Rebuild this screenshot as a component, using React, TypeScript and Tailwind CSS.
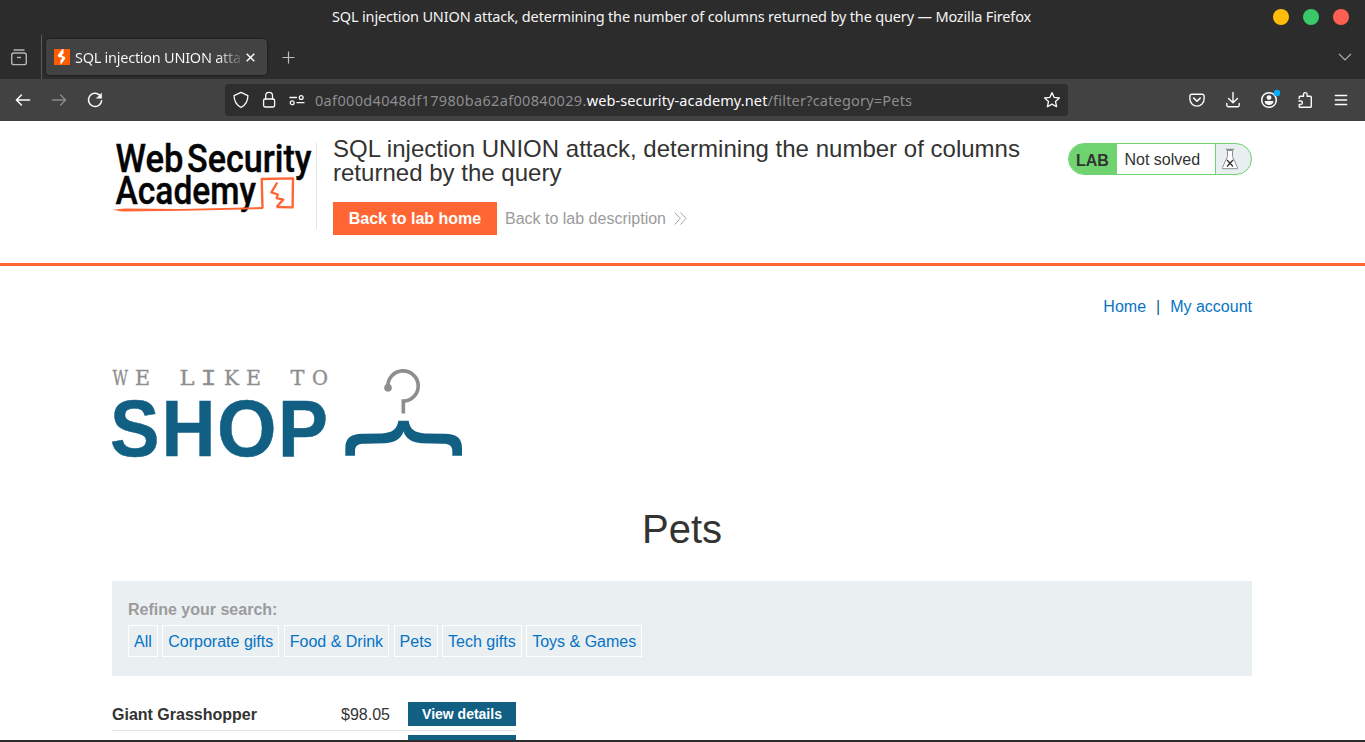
import React from 'react';

type IconProps = { children: React.ReactNode; className?: string; w?: number };

function Icon({ children, className = '', w = 1.3 }: IconProps) {
  return (
    <svg
      width="18"
      height="18"
      viewBox="0 0 18 18"
      fill="none"
      stroke="currentColor"
      strokeWidth={w}
      strokeLinecap="round"
      strokeLinejoin="round"
      className={`shrink-0 ${className}`}
    >
      {children}
    </svg>
  );
}

function TitleBar() {
  return (
    <div className="grid h-[35px] grid-cols-[1fr_auto_1fr] items-center">
      <span />
      <span className="mt-[-2px] ml-[-2px] text-[14.5px] tracking-[-0.165px] whitespace-nowrap text-[#f4f4f4]">
        SQL injection UNION attack, determining the number of columns returned by the query — Mozilla Firefox
      </span>
      <div className="mt-[-1px] flex justify-end gap-[14px] pr-4">
        <span className="size-4 rounded-full bg-[#ffbd09]" />
        <span className="size-4 rounded-full bg-[#3ac968]" />
        <span className="size-4 rounded-full bg-[#ff5f51]" />
      </div>
    </div>
  );
}

function TabStrip() {
  return (
    <div className="flex h-11 text-[#fbfbfe]">
      <div className="flex w-[42px] border-r border-[#5a5a5a] pt-[14px] pl-[10px] text-[#b4b4b4]">
        <Icon w={1.4}>
          <path d="M4 1h10" />
          <rect x="1.7" y="4" width="14.6" height="11.6" rx="2.2" />
          <path d="M7.5 8.5h3" />
        </Icon>
      </div>
      <div className="mt-1 ml-1 flex h-9 w-[221px] items-center rounded bg-[#424242] pl-2 shadow-[0_0_3px_rgba(0,0,0,0.6)]">
        <svg width="16" height="16" viewBox="0 0 16 16" className="shrink-0">
          <rect width="16" height="16" fill="#ff5c00" />
          <path d="M8.500 0 3.600 6.400l.9 1.600 3.300.600v2L6.500 10.700V16L11.500 9.300 10.600 7.800 8.300 7V5h1.200V0z" fill="#fff" />
        </svg>
        <span className="mt-[2px] ml-[5px] w-[167px] overflow-hidden bg-gradient-to-r from-[#fbfbfe] from-85% to-[#fbfbfe]/10 bg-clip-text text-[14.5px] tracking-[-0.26px] whitespace-nowrap text-transparent">
          SQL injection UNION atta
        </span>
        <svg width="9" height="9" viewBox="0 0 9 9" fill="none" stroke="#fbfbfe" strokeWidth="1.5" className="ml-1 shrink-0">
          <path d="M.7.7l7.600 7.600M8.300.7.7 8.300" />
        </svg>
      </div>
      <svg width="13" height="13" viewBox="0 0 13 13" stroke="#bdbdbd" strokeWidth="1.2" className="mt-4 ml-[15px]">
        <path d="M6.500.5v12M.5 6.500h12" />
      </svg>
      <svg width="14" height="8" viewBox="0 0 14 8" fill="none" stroke="#b4b4b4" strokeWidth="1.2" className="mt-[18px] mr-[13px] ml-auto">
        <path d="M1 .8l6 6 6-6" />
      </svg>
    </div>
  );
}

function NavBar() {
  return (
    <div className="flex h-[42px] items-center bg-[#424242] pl-[14px] text-[#fbfbfe]">
      <Icon w={1.5}>
        <path d="M2.400 9h13.200M7.400 4 2.400 9l5 5" />
      </Icon>
      <Icon className="ml-[18px] text-[#8a8a8a]" w={1.4}>
        <path d="M2.400 9h13.200M10.600 4l5 5-5 5" />
      </Icon>
      <Icon className="ml-[18px]" w={1.5}>
        <path d="M13.700 4.200a6.600 6.600 0 1 0 1.900 5.600" />
        <path d="M15.600 2.300v5h-5z" fill="currentColor" strokeWidth="0.5" />
      </Icon>
      <div className="ml-[121px] flex h-8 w-[843px] items-center rounded bg-[#2e2e2e] pl-[7px]">
        <Icon>
          <path d="M9 1.300 2.100 4.600C2 9.800 4.300 14 9 16.500 13.700 14 16 9.800 15.900 4.600z" />
        </Icon>
        <Icon className="ml-[10px]">
          <rect x="3.600" y="8" width="11" height="8" rx="1.400" />
          <path d="M5.700 8V4.700a3.400 3.400 0 0 1 6.800 0V8" />
        </Icon>
        <Icon className="ml-[10px]">
          <path d="M2 6.500h6.500M9 11.700h7" />
          <circle cx="13.200" cy="6.500" r="1.900" />
          <circle cx="4.200" cy="11.700" r="1.900" />
        </Icon>
        <span className="mt-[2px] ml-[9px] text-[14.5px] tracking-[0.330px] whitespace-nowrap text-[#8d8d8f]">
          0af000d4048df17980ba62af00840029.
          <span className="tracking-[0.110px] text-[#fbfbfe]">web-security-academy.net</span>
          <span className="tracking-[0.200px]">/filter?category=Pets</span>
        </span>
        <Icon className="mr-[7px] ml-auto">
          <path d="M9 1.600l2.200 4.800 5.200.6-3.900 3.500 1.100 5.200L9 13.100l-4.600 2.600 1.100-5.200L1.600 7l5.200-.6z" />
        </Icon>
      </div>
      <div className="ml-auto flex items-center gap-[18px] pr-[15px]">
        <Icon w={1.400}>
          <path d="M3.900 3.200h10.200a2 2 0 0 1 2 2V8a7.100 7.100 0 0 1-14.200 0V5.200a2 2 0 0 1 2-2z" />
          <path d="M5.800 7.100 9 10.200l3.200-3.100" strokeWidth="1.600" />
        </Icon>
        <Icon w={1.400}>
          <path d="M9 1.500v10M4.500 7.400 9 11.800l4.500-4.400M2.800 12.500v1.700a1.500 1.500 0 0 0 1.500 1.500h9.400a1.500 1.500 0 0 0 1.500-1.500v-1.700" />
        </Icon>
        <Icon w={1.500} className="overflow-visible">
          <circle cx="9" cy="9" r="7.300" />
          <circle cx="9" cy="6.600" r="2.400" fill="currentColor" stroke="none" />
          <path d="M4.600 10h8.800c0 2.600-2 4-4.400 4s-4.400-1.400-4.400-4z" fill="currentColor" stroke="none" />
          <circle cx="17" cy="2" r="3.200" fill="#00aef8" stroke="none" />
        </Icon>
        <Icon w={1.400}>
          <path d="M3.200 7.500V6.200a1 1 0 0 1 1-1h3.300V3.400a1.800 1.800 0 0 1 3.600 0v1.800h3.200a1 1 0 0 1 1 1v9a1 1 0 0 1-1 1H4.200a1 1 0 0 1-1-1v-1.800h1.500a1.700 1.700 0 0 0 0-3.400H3" />
        </Icon>
        <Icon w={1.300}>
          <path d="M3.300 4.500h11.400M3.300 9h11.400M3.300 13.500h11.400" />
        </Icon>
      </div>
    </div>
  );
}

function AcademyLogo() {
  return (
    <svg width="204" height="80" viewBox="112 137 204 80" className="mt-4 shrink-0 overflow-visible">
      <g fontFamily="Roboto, sans-serif" fontWeight="500" fontSize="38" fill="#050505" stroke="#050505" strokeWidth="0.400">
        <text x="115.500" y="171.500" textLength="68" lengthAdjust="spacingAndGlyphs">Web</text>
        <text x="187" y="171.500" textLength="124.500" lengthAdjust="spacingAndGlyphs">Security</text>
        <text x="115.500" y="204" textLength="140.500" lengthAdjust="spacingAndGlyphs">Academy</text>
      </g>
      <g fill="none" stroke="#ff6633" strokeLinejoin="round">
        <path d="M262.500 208.200 261.700 179 293 178.400 292.600 207.400 276.500 207" strokeWidth="2.400" />
        <path d="M277.200 182.500 271.400 192.300 277.800 194.500 276.600 198.200 283.300 199.600 276.700 206.800" strokeWidth="2.300" />
      </g>
      <path d="M112.500 209.800 125 208.600 180 209 263 207v2.100l-81 1.700-60 .6z" fill="#ff6633" />
    </svg>
  );
}

function LabStatus() {
  return (
    <div className="mt-[22px] ml-auto flex h-8 w-[184px] overflow-hidden rounded-full border border-[#6fd36f] bg-[#e9eef1] text-[#333332]">
      <span className="flex w-12 items-center bg-[#6fd36f] pt-[3px] pl-[7px] font-bold">LAB</span>
      <span className="flex w-[98px] items-center bg-white pt-[2px] pl-[7.500px]">Not solved</span>
      <span className="flex flex-1 items-center border-l border-[#6fd36f] pl-[5px]">
        <svg width="18" height="22" viewBox="0 0 18 22" fill="none" stroke="#8a8e90" strokeWidth="1">
          <path d="M6.500 2.500v6L1.500 19.500v1.200h15v-1.200l-5-11v-6z" fill="#fff" />
          <path d="M5 1.500h8" strokeWidth="1.400" />
          <path d="M6 12l6 6.500M12 12l-6 6.500" stroke="#333" strokeWidth="1.300" />
        </svg>
      </span>
    </div>
  );
}

function LabHeader() {
  return (
    <header className="flex h-[145px] border-b-[3px] border-[#ff6633] px-[112px] pr-[113px]">
      <AcademyLogo />
      <div className="mt-[22px] h-[86px] w-px bg-[#e3e3e3]" />
      <div className="mt-4 ml-4 w-[700px]">
        <h2 className="text-2xl leading-6 tracking-[0.015px] text-[#333332]">
          SQL injection UNION attack, determining the number of columns returned by the query
        </h2>
        <div className="mt-[17px] flex items-center">
          <a className="flex h-[33px] w-[164px] items-center justify-center bg-[#ff6633] font-bold text-white">Back to lab home</a>
          <a className="ml-2 text-[#9b9b9b]">Back to lab description</a>
          <svg width="13" height="13" viewBox="0 0 13 13" fill="none" stroke="#9b9b9b" strokeWidth="0.900" className="mt-[-1px] ml-2">
            <path d="M.7.500l5.500 6-5.500 6M6.500.500l5.500 6-5.500 6" />
          </svg>
        </div>
      </div>
      <LabStatus />
    </header>
  );
}

function ShopLogo() {
  return (
    <svg width="352" height="90" viewBox="111 367.500 352 90" className="-ml-px overflow-visible">
      <g
        fontFamily="'DejaVu Serif Condensed', 'DejaVu Serif', serif"
        fontSize="20"
        fill="#8e8e8e"
        stroke="#8e8e8e"
        strokeWidth="0.300"
      >
        <text x="112.500" y="384" textLength="15.500" lengthAdjust="spacingAndGlyphs">W</text>
        <text x="135" y="384" textLength="15" lengthAdjust="spacingAndGlyphs">E</text>
        <text x="179.500" y="384" textLength="15" lengthAdjust="spacingAndGlyphs">L</text>
        <text x="200.500" y="384" fontFamily="'Liberation Mono', monospace" fontSize="22" textLength="16" lengthAdjust="spacingAndGlyphs">I</text>
        <text x="224" y="384" textLength="15" lengthAdjust="spacingAndGlyphs">K</text>
        <text x="246" y="384" textLength="15" lengthAdjust="spacingAndGlyphs">E</text>
        <text x="290.500" y="384" textLength="14" lengthAdjust="spacingAndGlyphs">T</text>
        <text x="312" y="384" textLength="16" lengthAdjust="spacingAndGlyphs">O</text>
      </g>
      <g
        fontFamily="'Liberation Sans', sans-serif"
        fontWeight="700"
        fontSize="79.500"
        fill="#125f84"
        stroke="#125f84"
        strokeWidth="0.500"
      >
        <text x="110" y="455" textLength="49.500" lengthAdjust="spacingAndGlyphs">S</text>
        <text x="161.400" y="455" textLength="54" lengthAdjust="spacingAndGlyphs">H</text>
        <text x="217" y="455" textLength="59.500" lengthAdjust="spacingAndGlyphs">O</text>
        <text x="278" y="455" textLength="50" lengthAdjust="spacingAndGlyphs">P</text>
      </g>
      <g transform="translate(100 355) scale(0.33333)">
        <path d="M864 97A45.500 45.500 0 1 1 910 137V174" fill="none" stroke="#8e8e8e" strokeWidth="11" />
        <circle cx="864" cy="97" r="11.500" fill="#8e8e8e" />
        <path
          d="M895 196H926C930 222 944 232 975 234L1035 235C1070 236 1086 248 1086 278V301H1057V288C1057 270 1047 265 1024 265L965 263C934 261 916 247 910.500 227C905 247 887 261 856 263L797 265C774 265 765 270 765 288V301H736V278C736 248 752 236 787 235L846 234C877 232 891 222 895 196Z"
          fill="#125f84"
        />
      </g>
    </svg>
  );
}

const categories = ['All', 'Corporate gifts', 'Food & Drink', 'Pets', 'Tech gifts', 'Toys & Games'];

function Shop() {
  return (
    <main className="w-[1252px] pl-[112px]">
      <nav className="mt-[29px] flex h-6 items-center justify-end gap-[10px] text-[#0673c3]">
        <a>Home</a>
        <span className="text-[#125f84]">|</span>
        <a>My account</a>
      </nav>
      <div className="mt-[49px] flex h-[90px]">
        <ShopLogo />
      </div>
      <h1 className="mt-[47px] text-center text-[40px] leading-[48px] text-[#333332]">Pets</h1>
      <section className="mt-7 h-[95px] bg-[#eaeff2] px-4 pt-[17px]">
        <div className="h-[27px] leading-6 font-bold text-[#9b9b9b]">Refine your search:</div>
        <div className="flex gap-[4.500px] text-[#0673c3]">
          {categories.map((name) => (
            <a key={name} className="flex h-8 items-center border border-white px-[5px] pt-[2px] whitespace-nowrap">
              {name}
            </a>
          ))}
        </div>
      </section>
      <section className="mt-[21px] w-[404px] text-[#333332]">
        <div className="flex h-[34px] items-center border-b border-[#e3e3e3]">
          <span className="w-[229px] pt-[2px] font-bold">Giant Grasshopper</span>
          <span className="w-[67px] pt-[2px]">$98.05</span>
          <a className="flex h-6 w-[108px] items-center justify-center bg-[#125f84] text-sm font-bold text-white">View details</a>
        </div>
        <div className="flex h-[34px] justify-end pt-1">
          <a className="h-6 w-[108px] bg-[#125f84]" />
        </div>
      </section>
    </main>
  );
}

export default function App() {
  return (
    <div className="flex h-[742px] w-[1365px] flex-col overflow-hidden bg-[#2c2c2c]">
      <div className="shrink-0 font-['Noto_Sans',sans-serif]">
        <TitleBar />
        <TabStrip />
        <NavBar />
      </div>
      <div className="h-[619px] shrink-0 overflow-hidden bg-white font-['Liberation_Sans',Arial,sans-serif] text-base">
        <LabHeader />
        <Shop />
      </div>
    </div>
  );
}
